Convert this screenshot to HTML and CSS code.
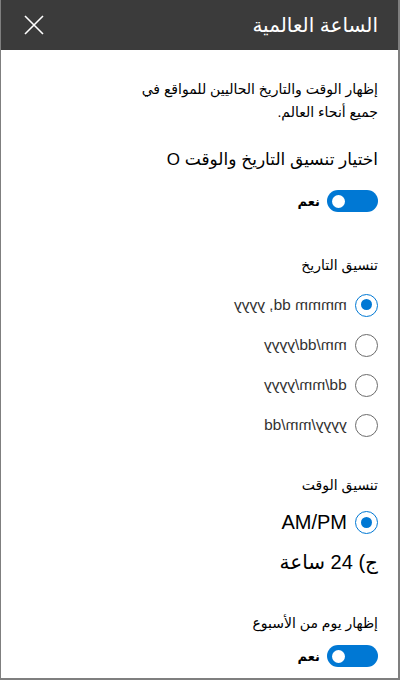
FILE: index.html
```html
<!DOCTYPE html>
<html lang="ar" dir="rtl">
<head>
    <meta charset="UTF-8">
    <meta name="viewport" content="width=device-width, initial-scale=1.0">
    <title>الساعة العالمية</title>
    <link rel="stylesheet" href="styles.css">
</head>
<body>
    <div class="panel">
        <div class="panel-header">
            <div class="panel-title">الساعة العالمية</div>
            <button class="close-btn" aria-label="إغلاق">
                <svg width="20" height="20" viewBox="0 0 20 20">
                    <path d="M1 1 L19 19 M19 1 L1 19" stroke="#ffffff" stroke-width="1.6" fill="none"/>
                </svg>
            </button>
        </div>

        <div class="panel-body">
            <p class="desc">إظهار الوقت والتاريخ الحاليين للمواقع في جميع أنحاء العالم.</p>

            <div class="big-heading">اختيار تنسيق التاريخ والوقت O</div>
            <div class="toggle-row first">
                <span class="toggle"><span class="thumb"></span></span>
                <span class="toggle-label">نعم</span>
            </div>

            <div class="group-label date-label">تنسيق التاريخ</div>
            <div class="radio-list">
                <div class="radio-row">
                    <span class="radio checked"></span>
                    <span class="radio-text"><span class="mirror">mmmm dd, yyyy</span></span>
                </div>
                <div class="radio-row">
                    <span class="radio"></span>
                    <span class="radio-text"><span class="mirror">mm/dd/yyyy</span></span>
                </div>
                <div class="radio-row">
                    <span class="radio"></span>
                    <span class="radio-text"><span class="mirror">dd/mm/yyyy</span></span>
                </div>
                <div class="radio-row">
                    <span class="radio"></span>
                    <span class="radio-text"><span class="mirror">yyyy/mm/dd</span></span>
                </div>
            </div>

            <div class="group-label time-label">تنسيق الوقت</div>
            <div class="time-row ampm">
                <span class="radio checked"></span>
                <span class="time-text">AM/PM</span>
            </div>
            <div class="time-row">
                <span class="time-text">ج) 24 ساعة</span>
            </div>

            <div class="group-label week-label">إظهار يوم من الأسبوع</div>
            <div class="toggle-row last">
                <span class="toggle"><span class="thumb"></span></span>
                <span class="toggle-label">نعم</span>
            </div>
        </div>
    </div>
</body>
</html>
```

FILE: styles.css
```css
* {
    margin: 0;
    padding: 0;
    box-sizing: border-box;
}

body {
    font-family: 'Liberation Sans', 'DejaVu Sans', sans-serif;
    background: #ffffff;
    color: #000000;
    width: 400px;
    height: 680px;
    overflow: hidden;
}

.panel {
    width: 400px;
    height: 680px;
    border-left: 1px solid #7f7f7f;
    border-right: 2px solid #7f7f7f;
    border-bottom: 2px solid #7f7f7f;
    background: #ffffff;
}

.panel-header {
    height: 50px;
    background: #3b3b3b;
    display: flex;
    align-items: center;
    justify-content: space-between;
    padding: 0 20px 0 23px;
}

.panel-title {
    color: #ffffff;
    font-size: 20px;
}

.close-btn {
    background: none;
    border: none;
    width: 20px;
    height: 20px;
    display: flex;
}

.panel-body {
    padding: 0 20px 0 20px;
}

.desc {
    margin-top: 28px;
    font-size: 14px;
    line-height: 23px;
    padding-left: 108px;
}

.big-heading {
    margin-top: 24px;
    font-size: 17px;
    line-height: 24px;
}

.toggle-row {
    display: flex;
    align-items: center;
    gap: 7px;
    height: 22px;
}

.toggle-row.first {
    margin-top: 18px;
}

.toggle-row.last {
    margin-top: 12px;
}

.toggle {
    width: 51px;
    height: 22px;
    border-radius: 11px;
    background: #0078d4;
    position: relative;
    display: inline-block;
}

.thumb {
    position: absolute;
    left: 5px;
    top: 4.5px;
    width: 13px;
    height: 13px;
    border-radius: 50%;
    background: #ffffff;
}

.toggle-label {
    font-size: 13px;
    font-weight: bold;
}

.group-label {
    font-size: 14px;
    line-height: 20px;
}

.date-label {
    margin-top: 43px;
}

.time-label {
    margin-top: 30px;
}

.week-label {
    margin-top: 32px;
}

.radio-list {
    margin-top: 10px;
}

.radio-row {
    height: 40px;
    display: flex;
    align-items: center;
    gap: 8px;
}

.radio {
    width: 23px;
    height: 23px;
    border-radius: 50%;
    border: 1.5px solid #6b6b6b;
    position: relative;
    flex: none;
}

.radio.checked {
    border-color: #0078d4;
}

.radio.checked::after {
    content: "";
    position: absolute;
    left: 4.5px;
    top: 4.5px;
    width: 11px;
    height: 11px;
    border-radius: 50%;
    background: #0078d4;
}

.radio-text {
    font-size: 15.5px;
    color: #323130;
}

.mirror {
    display: inline-block;
    direction: ltr;
    unicode-bidi: isolate;
    transform: scaleX(-1);
}

.time-row {
    height: 39px;
    display: flex;
    align-items: center;
    gap: 8px;
}

.time-row.ampm {
    margin-top: 8px;
}

.time-text {
    font-size: 20px;
}
```
